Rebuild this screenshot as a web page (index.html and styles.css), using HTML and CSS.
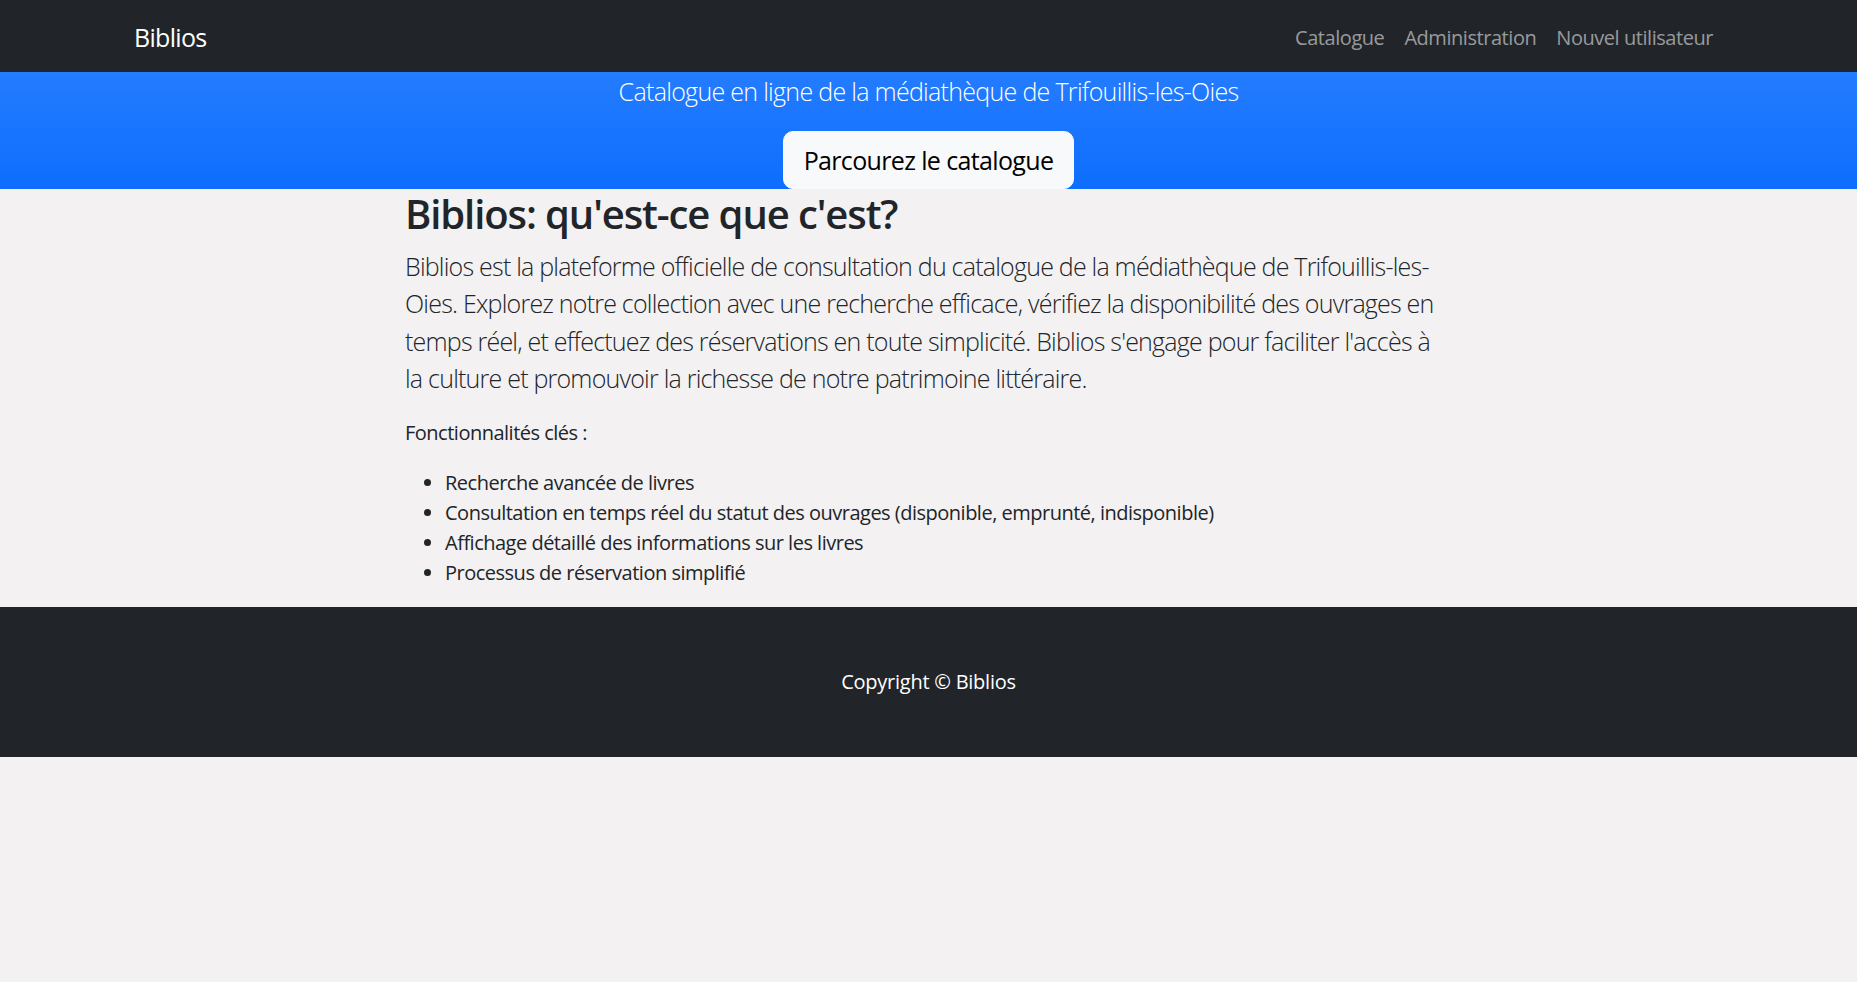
FILE: index.html
```html
<!DOCTYPE html>
<html lang="fr">
<head>
<meta charset="utf-8">
<title>Biblios</title>
<link rel="stylesheet" href="styles.css">
</head>
<body>
<nav class="navbar">
  <div class="navbar-inner">
    <a class="brand" href="#">Biblios</a>
    <ul class="nav-links">
      <li><a href="#">Catalogue</a></li>
      <li><a href="#">Administration</a></li>
      <li><a href="#">Nouvel utilisateur</a></li>
    </ul>
  </div>
</nav>
<header class="hero">
  <p class="hero-tagline">Catalogue en ligne de la médiathèque de Trifouillis-les-Oies</p>
  <a class="btn-light" href="#">Parcourez le catalogue</a>
</header>
<main class="content">
  <h2 class="title">Biblios: qu'est-ce que c'est?</h2>
  <p class="lead">Biblios est la plateforme officielle de consultation du catalogue de la médiathèque de Trifouillis-les-Oies. Explorez notre collection avec une recherche efficace, vérifiez la disponibilité des ouvrages en temps réel, et effectuez des réservations en toute simplicité. Biblios s'engage pour faciliter l'accès à la culture et promouvoir la richesse de notre patrimoine littéraire.</p>
  <p class="text">Fonctionnalités clés :</p>
  <ul class="features">
    <li>Recherche avancée de livres</li>
    <li>Consultation en temps réel du statut des ouvrages (disponible, emprunté, indisponible)</li>
    <li>Affichage détaillé des informations sur les livres</li>
    <li>Processus de réservation simplifié</li>
  </ul>
</main>
<footer class="footer">
  <p class="copyright">Copyright © Biblios</p>
</footer>
</body>
</html>
```
FILE: styles.css
```css
* { box-sizing: border-box; }

body {
  margin: 0;
  font-family: "Segoe UI", "Open Sans", "Noto Sans", sans-serif;
  font-size: 20px;
  line-height: 1.5;
  letter-spacing: -0.5px;
  color: #212529;
  background: #f3f1f1;
}

a { text-decoration: none; }

.navbar {
  background: #212529;
  height: 72px;
  padding-top: 4px;
}

.navbar-inner {
  height: 100%;
  padding: 0 134px;
  display: flex;
  align-items: center;
  justify-content: space-between;
}

.brand {
  color: #fff;
  font-size: 25px;
  line-height: 1.5;
  letter-spacing: -0.7px;
}

.nav-links {
  list-style: none;
  margin: 0;
  padding: 0;
  display: flex;
}

.nav-links a {
  display: block;
  padding: 10px;
  color: rgba(255, 255, 255, 0.55);
  font-size: 20px;
  line-height: 1.5;
  letter-spacing: -0.45px;
}

.hero {
  background-color: #0d6efd;
  background-image: linear-gradient(180deg, #247cff, #0d6efd);
  display: flex;
  flex-direction: column;
  align-items: center;
  color: #fff;
}

.hero-tagline {
  margin: 0 0 20px;
  padding-top: 1px;
  font-size: 25px;
  font-weight: 300;
  line-height: 37.5px;
  letter-spacing: -0.7px;
}

.btn-light {
  display: block;
  padding: 10px 20px;
  font-size: 25px;
  line-height: 36px;
  letter-spacing: -0.64px;
  color: #000;
  background: #f8f9fa;
  border: 1px solid #f8f9fa;
  border-radius: 10px;
}

.content {
  max-width: 1047px;
  margin: 0 auto;
  padding-top: 1px;
}

.title {
  margin: 0 0 10px;
  font-size: 40px;
  font-weight: 600;
  line-height: 1.2;
  letter-spacing: -1.1px;
}

.lead {
  margin: 0 0 20px;
  font-size: 25px;
  font-weight: 300;
  line-height: 37.5px;
  letter-spacing: -0.78px;
}

.text {
  margin: 0 0 20px;
}

.features {
  margin: 0 0 19px;
  padding-left: 40px;
}

.footer {
  background: #212529;
  padding: 60px 0;
  text-align: center;
  color: #fff;
}

.copyright {
  margin: 0;
  letter-spacing: -0.25px;
}
```
